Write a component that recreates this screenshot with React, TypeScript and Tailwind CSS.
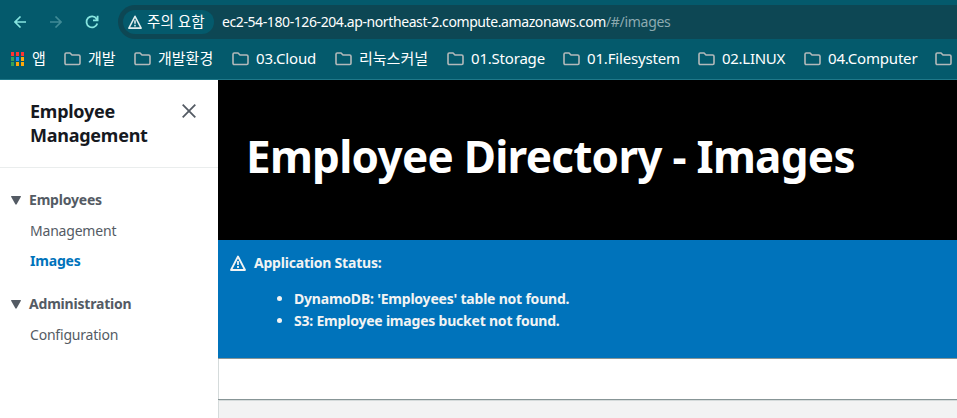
import React from 'react';

const bookmarks = [
  { label: '개발', width: 'w-[70px]', tracking: 'tracking-[0px]' },
  { label: '개발환경', width: 'w-[98px]', tracking: 'tracking-[0px]' },
  { label: '03.Cloud', width: 'w-[103px]', tracking: 'tracking-[-0.15px]' },
  { label: '리눅스커널', width: 'w-[112px]', tracking: 'tracking-[0px]' },
  { label: '01.Storage', width: 'w-[116px]', tracking: 'tracking-[-0.2px]' },
  { label: '01.Filesystem', width: 'w-[135px]', tracking: 'tracking-[-0.17px]' },
  { label: '02.LINUX', width: 'w-[106px]', tracking: 'tracking-[-0.28px]' },
  { label: '04.Computer', width: 'w-[131px]', tracking: 'tracking-[-0.2px]' },
  { label: '', width: 'w-[22px]', tracking: 'tracking-[0px]' },
];

const appDots = [
  'bg-[#ff3333]', 'bg-[#ff3333]', 'bg-[#ff3333]',
  'bg-[#34a058]', 'bg-[#2088f5]', 'bg-[#ffa80a]',
  'bg-[#34a058]', 'bg-[#ffa80a]', 'bg-[#ffa80a]',
];

function Folder() {
  return (
    <svg className="h-[14px] w-[17px] shrink-0" viewBox="0 0 17 14" fill="none" stroke="#b3b9ba" strokeWidth="1.6">
      <path d="M1 2.2Q1 1 2.2 1H6l2 2h6.6Q16 3 16 4.2v7.1q0 1.2-1.2 1.2H2.2Q1 12.500 1 11.300Z" />
    </svg>
  );
}

function Warning({ className }: { className: string }) {
  return (
    <svg className={className} viewBox="0 0 16 16" fill="none" stroke="currentColor" strokeWidth="1.8" strokeLinejoin="round">
      <path d="M8 1.500 15 15H1Z" />
      <path d="M8 6v4M8 11v2" />
    </svg>
  );
}

function Section({ title, children, className = '' }: { title: string; children: React.ReactNode; className?: string }) {
  return (
    <section className={className}>
      <h3 className="flex h-[22px] items-center font-bold">
        <svg className="mr-2 ml-[11px] h-[9px] w-[10px]" viewBox="0 0 10 9" fill="#545b64">
          <path d="M.5 0h9q.7 0 .4.800L5.800 8q-.8 1.400-1.600 0L.1.800Q-.2 0 .5 0Z" />
        </svg>
        {title}
      </h3>
      <div className="pl-[30px]">{children}</div>
    </section>
  );
}

export default function App() {
  return (
    <div className="h-[418px] w-[957px] overflow-hidden bg-white font-['Noto_Sans','Noto_Sans_CJK_KR',sans-serif]">
      <header className="h-20 border-b border-[#1f7889] bg-[#045a6c] text-white">
        <div className="flex h-[39px] pt-[5px]">
          <div className="flex w-[118px] shrink-0 items-center">
            <svg className="ml-[14px] h-3 w-3" viewBox="0 0 12 12" fill="none" stroke="#87e5df" strokeWidth="1.6">
              <path d="M12 6H1M6.500.500 1 6l5.500 5.500" />
            </svg>
            <svg className="ml-6 h-3 w-3" viewBox="0 0 12 12" fill="none" stroke="#408b96" strokeWidth="1.6">
              <path d="M0 6h11M5.500.500 11 6l-5.500 5.500" />
            </svg>
            <svg className="ml-[23px] h-[14px] w-[14px]" viewBox="0 0 14 14" fill="none" stroke="#87e5df" strokeWidth="1.8">
              <path d="M12.300 8.400A5.500 5.500 0 1 1 11.500 3.700L12.500 5M12.600.800V5.300H8" />
            </svg>
          </div>
          <div className="flex grow items-center rounded-l-full bg-[#0d4754] pl-[5px] text-[14px] whitespace-nowrap">
            <div className="flex h-6 w-[91px] shrink-0 items-center rounded-full bg-[#045a6c] pl-[5px]">
              <Warning className="mr-[5px] h-[14px] w-[14px] text-[#e2eeee]" />
              <span className="-mt-px text-[14.500px] tracking-[0.1px]">주의 요함</span>
            </div>
            <span className="-mt-px ml-2 tracking-[-0.405px]">ec2-54-180-126-204.ap-northeast-2.compute.amazonaws.com</span>
            <span className="-mt-px text-[#8caab0] tracking-[-0.300px]">/#/images</span>
          </div>
        </div>
        <div className="flex h-[39px] items-center whitespace-nowrap text-[15px]">
          <div className="ml-[11px] grid w-[13px] shrink-0 grid-cols-3 gap-x-[2px] gap-y-px">
            {appDots.map((color, i) => <i key={i} className={`h-[4px] w-[3px] ${color}`} />)}
          </div>
          <span className="-mt-px ml-2 w-[32px] shrink-0">앱</span>
          {bookmarks.map((b, i) => (
            <div key={i} className={`flex shrink-0 items-center ${b.width}`}>
              <Folder />
              <span className={`-mt-px ml-[7px] ${b.tracking}`}>{b.label}</span>
            </div>
          ))}
        </div>
      </header>
      <div className="flex h-[338px]">
        <aside className="w-[218px] shrink-0 text-[14px] leading-[22px] tracking-[-0.200px] text-[#545b64]">
          <div className="flex h-[88px] justify-between border-b border-[#eaeded] pt-[19px] pr-[22px] pl-[30px]">
            <h2 className="w-[130px] text-[18px] leading-6 font-bold tracking-[-0.250px] text-[#16191f]">Employee Management</h2>
            <svg className="mt-[5px] h-[14px] w-[14px]" viewBox="0 0 14 14" fill="none" stroke="#545b64" strokeWidth="1.8">
              <path d="M.700.700 13.300 13.300M13.300.700.700 13.300" />
            </svg>
          </div>
          <Section title="Employees" className="pt-[21px]">
            <p className="mt-[9px]">Management</p>
            <p className="mt-2 font-bold text-[#0073bb]">Images</p>
          </Section>
          <Section title="Administration" className="pt-[21px]">
            <p className="mt-[9px]">Configuration</p>
          </Section>
        </aside>
        <main className="flex grow flex-col">
          <div className="flex h-40 items-center bg-black pb-2 pl-[28px]">
            <h1 className="text-[44px] leading-[56px] font-bold tracking-[-0.720px] whitespace-nowrap text-white">Employee Directory - Images</h1>
          </div>
          <div className="h-[118px] bg-[#0073bb] pt-3 pl-3 text-[14px] leading-[22px] font-bold tracking-[-0.210px] text-[#f2f3f3]">
            <div className="flex items-center">
              <Warning className="mr-2 h-4 w-4" />
              Application Status:
            </div>
            <ul className="mt-[14px] list-disc pl-16">
              <li>DynamoDB: 'Employees' table not found.</li>
              <li>S3: Employee images bucket not found.</li>
            </ul>
          </div>
          <div className="h-[42px] border-y border-[#879596]">
            <div className="h-full border-l border-[#d5dbdb]" />
          </div>
          <div className="grow border-t border-l border-[#d5dbdb] bg-[#f2f3f3]" />
        </main>
      </div>
    </div>
  );
}
